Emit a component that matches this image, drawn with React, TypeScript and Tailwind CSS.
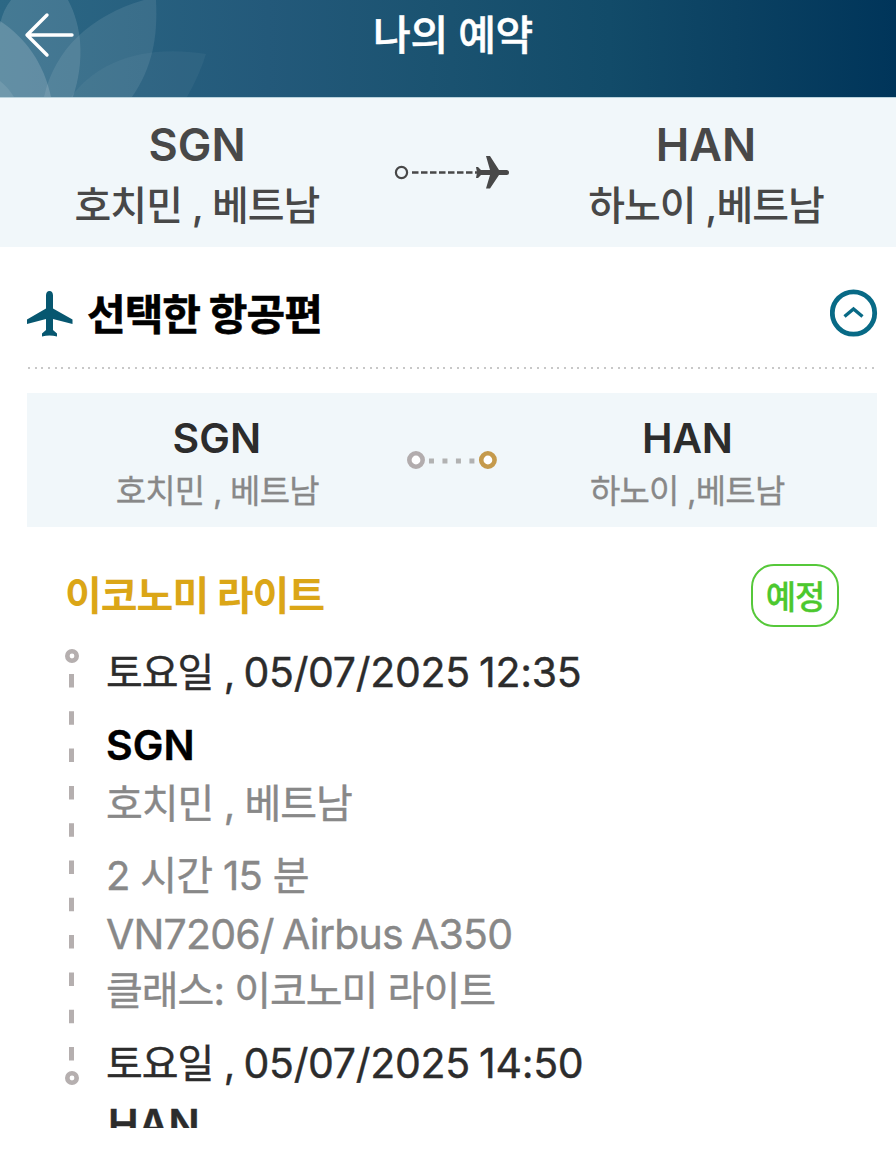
import type { ReactNode } from "react";

type LineProps = { className: string; children: ReactNode };

function Line({ className, children }: LineProps) {
  return <div className={"whitespace-pre " + className}>{children}</div>;
}

function PlaneUp() {
  return (
    <svg width="46" height="46" viewBox="0 0 46 46" fill="#075770">
      <path d="M22.5 0C24.8 0 26 2 26 4.500V17.500L45.500 28.500V33L26 28V39L30 42.500V45.500Q22.500 43.500 15 45.500V42.500L19 39V28L0 33V28.500L19 17.500V4.500C19 2 20.200 0 22.500 0Z" />
    </svg>
  );
}

function Header() {
  return (
    <header className="relative flex h-[97px] w-full justify-center overflow-hidden bg-[linear-gradient(90deg,#2c6885_0%,#23597a_30%,#1b5371_48%,#124b69_68%,#0b4162_82%,#00355a_100%)]">
      <svg className="absolute left-0 top-0" width="220" height="97" viewBox="0 0 220 97" fill="#ffffff">
        <path fillOpacity=".12" d="M0 24Q3 10 11 0H68C82 26 85 60 73 97H0Z" />
        <path fillOpacity=".16" d="M0 21C26 38 44 64 51 97H0Z" />
        <path fillOpacity=".09" d="M0 81Q8 87 14 97H0Z" />
        <path fillOpacity=".09" d="M44 97C54 50 91 15 144 0H156C158 38 152 68 132 97Z" />
        <path fillOpacity=".045" d="M71 97C97 61 145 44 206 54Q200 74 187 97Z" />
        <path d="M47 15L27 35L47 55M28 35H72" fill="none" stroke="#fff" strokeWidth="3.4" strokeLinecap="round" strokeLinejoin="round" />
      </svg>
      <Line className="mt-[15px] h-10 pl-[10px] text-[41px] font-medium leading-10 tracking-[-0.4px] text-white [-webkit-text-stroke:0.5px]">나의 예약</Line>
    </header>
  );
}

function RouteBar() {
  return (
    <section className="flex h-[150px] border-t border-[#b9d2dc] bg-[#f1f7fa] text-[#484848]">
      <div className="flex w-[394px] flex-col items-center pt-[27px]">
        <Line className="h-10 text-[45px] font-semibold leading-10">SGN</Line>
        <Line className="mt-[21px] h-10 text-[40px] font-medium leading-10 tracking-[-1px]">호치민 , 베트남</Line>
      </div>
      <svg className="mt-[56px]" width="116" height="36" viewBox="0 0 116 36">
        <circle cx="7.500" cy="18.500" r="5.600" fill="none" stroke="#484848" strokeWidth="2.200" />
        <path d="M18 18.500H85" stroke="#484848" strokeWidth="2.400" strokeDasharray="6.500 2.500" />
        <path fill="#484848" d="M92 2h4l9 14h7.500a2.500 2.500 0 0 1 0 5H105l-9 13.500h-4l4-13.500h-9l-3 3h-2l1-5.500-1-5.500h2l3 3h9Z" />
      </svg>
      <div className="ml-auto flex w-[380px] flex-col items-center pt-[27px]">
        <Line className="h-10 text-[45px] font-semibold leading-10">HAN</Line>
        <Line className="mt-[21px] h-10 text-[40px] font-medium leading-10 tracking-[-1px]">하노이 ,베트남</Line>
      </div>
    </section>
  );
}

function SelectedHeading() {
  return (
    <div className="ml-[27px] mr-[18px] flex h-[120px] items-start">
      <div className="pt-[44px]"><PlaneUp /></div>
      <Line className="ml-[14px] mt-[48px] h-10 text-[42px] font-bold leading-10 tracking-[-1px] text-black [-webkit-text-stroke:0.6px]">선택한 항공편</Line>
      <svg className="ml-auto mt-[42px]" width="48" height="48" viewBox="0 0 48 48" fill="none" stroke="#086a86">
        <circle cx="23.500" cy="24" r="21.200" strokeWidth="4.800" />
        <path d="M14.500 27.500L23.500 20L32.500 27.500" strokeWidth="3.400" />
      </svg>
    </div>
  );
}

function SegmentRoute() {
  return (
    <section className="ml-[27px] mt-6 flex h-[134px] w-[850px] justify-between bg-[#f1f7fa]">
      <div className="flex w-[380px] flex-col items-center pt-[25px]">
        <Line className="h-10 text-[41px] font-semibold leading-10 text-[#2c2c2c]">SGN</Line>
        <Line className="mt-[13px] h-10 pl-px text-[33px] leading-10 tracking-[-0.8px] text-[#888888] [-webkit-text-stroke:0.3px]">호치민 , 베트남</Line>
      </div>
      <svg className="mt-[57px]" width="91" height="20" viewBox="0 0 91 20">
        <circle cx="9" cy="10" r="6.700" fill="#fff" stroke="#b2acad" strokeWidth="4.600" />
        <path d="M22 11H74" stroke="#b2b2b2" strokeWidth="5" strokeDasharray="5 8.500" />
        <circle cx="81" cy="10" r="6.700" fill="#fff" stroke="#c59a4c" strokeWidth="4.600" />
      </svg>
      <div className="flex w-[380px] flex-col items-center pt-[25px]">
        <Line className="h-10 text-[41px] font-semibold leading-10 tracking-[-0.3px] text-[#2c2c2c]">HAN</Line>
        <Line className="mt-[13px] h-10 text-[33px] leading-10 tracking-[-0.8px] text-[#888888] [-webkit-text-stroke:0.3px]">하노이 ,베트남</Line>
      </div>
    </section>
  );
}

function Timeline() {
  return (
    <svg className="mt-[12px] shrink-0" width="16" height="438" viewBox="0 0 16 438">
      <path d="M7.500 26V424" stroke="#b5afaf" strokeWidth="5" strokeDasharray="13.500 23.800" />
      <circle cx="8" cy="8" r="4.700" fill="#fff" stroke="#b5afaf" strokeWidth="4.600" />
      <circle cx="8" cy="430" r="4.700" fill="#fff" stroke="#b5afaf" strokeWidth="4.600" />
    </svg>
  );
}

function DateLine({ className, time }: { className: string; time: string }) {
  return (
    <Line className={"h-10 text-[#2c2c2c] " + className}>
      토요일 , <span className="-ml-px text-[41px] tracking-[-0.3px] [word-spacing:-2px]">05/07/2025 {time}</span>
    </Line>
  );
}

export default function App() {
  return (
    <div className="h-[1149px] w-[896px] overflow-hidden bg-white font-['Inter','Noto_Sans_CJK_KR',sans-serif]">
      <Header />
      <RouteBar />
      <SelectedHeading />
      <div className="ml-[28px] h-[2px] w-[847px] bg-[repeating-linear-gradient(90deg,#c8c8c8_0px,#c8c8c8_2px,transparent_2px,transparent_6.7px)]" />
      <SegmentRoute />
      <div className="mt-[37px] flex h-[72px] justify-between pl-[65px] pr-[57px]">
        <Line className="mt-[12px] h-10 text-[40px] font-bold leading-10 tracking-[-1px] text-[#dba617]">이코노미 라이트</Line>
        <div className="flex h-[63px] w-[88px] items-center justify-center rounded-[23px] border-2 border-[#56c83a] pt-[4px] text-[33px] font-medium tracking-[-1px] text-[#4cc82e] [-webkit-text-stroke:0.3px]">예정</div>
      </div>
      <div className="flex h-[492px] overflow-hidden pl-[64px]">
        <Timeline />
        <div className="ml-[26px] flex flex-col text-[40px] leading-10 tracking-[-1px] text-[#888888] [-webkit-text-stroke:0.4px]">
          <DateLine className="mt-4" time="12:35" />
          <Line className="mt-[33px] h-10 text-[41px] font-semibold tracking-normal text-black">SGN</Line>
          <Line className="mt-[19px] h-10">호치민 , 베트남</Line>
          <Line className="mt-8 h-10 tracking-[-0.7px]">2 시간 15 분</Line>
          <Line className="mt-[18px] h-10 text-[41px] tracking-[-0.8px] [word-spacing:-2.5px]">VN7206/ Airbus A350</Line>
          <Line className="mt-[17px] h-10">클래스: 이코노미 라이트</Line>
          <DateLine className="mt-[32px]" time="14:50" />
          <Line className="ml-[2px] mt-[21px] h-10 text-[41px] font-semibold tracking-normal text-[#2c2c2c]">HAN</Line>
        </div>
      </div>
    </div>
  );
}
